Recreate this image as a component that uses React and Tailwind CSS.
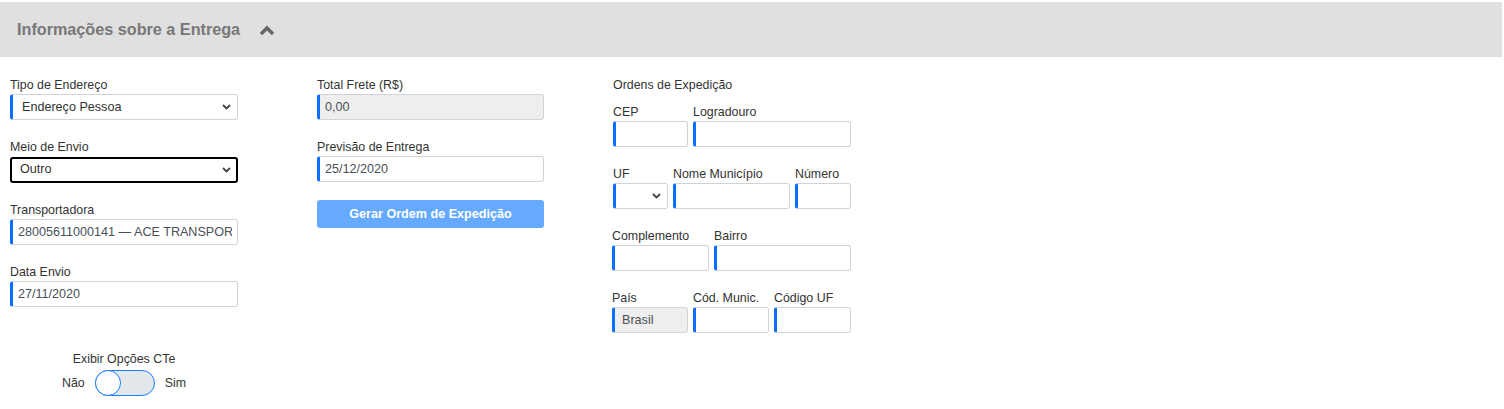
import { useState } from 'react';

const FONT = "font-['Liberation_Sans',Arial,sans-serif]";

function Label({ children }) {
    return <div className="mb-[2px] h-[14px] text-[12.4px] leading-[14px] text-[#333]">{children}</div>;
}

function TextInput({ value = '', disabled = false, className = '' }) {
    return (
        <input
            type="text" defaultValue={value} readOnly={disabled}
            className={`h-[26px] w-full rounded-[3px] border border-l-[3px] border-[#ced4da] border-l-[#0d6efd] px-[5px] text-[12.6px] text-[#495057] outline-none ${disabled ? 'bg-[#eeeeee]' : 'bg-white'} ${className}`}
        />
    );
}

function Chevron() {
    return (
        <svg className="pointer-events-none absolute right-[7px] top-1/2 -mt-[3px]" width="9" height="6" viewBox="0 0 9 6">
            <path d="M1 1l3.5 3.5L8 1" fill="none" stroke="#444" strokeWidth="1.8" />
        </svg>
    );
}

function Select({ value, focused = false, options = [] }) {
    return (
        <div className="relative">
            <select
                defaultValue={value}
                className={`h-[26px] w-full appearance-none rounded-[3px] bg-white px-[9px] text-[12.6px] text-[#333] outline-none ${focused ? 'border-2 border-black pl-[8px]' : 'border border-l-[3px] border-[#ced4da] border-l-[#0d6efd]'}`}
            >
                {options.map((o) => <option key={o} value={o}>{o}</option>)}
            </select>
            <Chevron />
        </div>
    );
}

function Field({ label, children, className = '' }) {
    return (
        <div className={className}>
            <Label>{label}</Label>
            {children}
        </div>
    );
}

export default function App() {
    const [cte, setCte] = useState(false);

    return (
        <div className={`${FONT} min-h-[409px] w-[1504px] bg-white`}>
            <div className="mt-[2px] flex h-[55px] w-[1502px] items-center bg-[#e0e0e0] pl-[17px]">
                <h3 className="text-[16.2px] font-bold text-[#777]">Informações sobre a Entrega</h3>
                <svg className="ml-[19px]" width="16" height="12" viewBox="0 0 16 12">
                    <path d="M2 10l6-6 6 6" fill="none" stroke="#666" strokeWidth="3.4" />
                </svg>
            </div>

            <div className="flex pt-[21px]">
                <div className="ml-[10px] flex w-[228px] flex-col gap-[20px]">
                    <Field label="Tipo de Endereço">
                        <Select value="Endereço Pessoa" options={['Endereço Pessoa', 'Endereço Empresa']} />
                    </Field>
                    <Field label="Meio de Envio">
                        <Select value="Outro" focused options={['Outro', 'Correios', 'Transportadora']} />
                    </Field>
                    <Field label="Transportadora">
                        <TextInput value="28005611000141 — ACE TRANSPORTES LTDA" />
                    </Field>
                    <Field label="Data Envio">
                        <TextInput value="27/11/2020" />
                    </Field>

                    <div className="mt-[25px] flex flex-col items-center">
                        <div className="text-[12.4px] leading-[14px] text-[#333]">Exibir Opções CTe</div>
                        <div className="mt-[4px] flex items-center text-[12.4px] text-[#333]">
                            <span>Não</span>
                            <button
                                type="button" onClick={() => setCte(!cte)}
                                className={`mx-[10px] flex h-[26px] w-[60px] items-center rounded-full border border-[#1a7dff] ${cte ? 'justify-end bg-[#1a7dff]' : 'bg-[#e3e7ea]'}`}
                            >
                                <span className="-m-[1px] h-[26px] w-[26px] rounded-full border border-[#1a7dff] bg-white" />
                            </button>
                            <span>Sim</span>
                        </div>
                    </div>
                </div>

                <div className="ml-[79px] flex w-[227px] flex-col gap-[20px]">
                    <Field label="Total Frete (R$)">
                        <TextInput value="0,00" disabled />
                    </Field>
                    <Field label="Previsão de Entrega">
                        <TextInput value="25/12/2020" />
                    </Field>
                    <button type="button" className="-mt-[2px] h-[28px] w-full rounded-[3px] bg-[#66aaff] text-[12.6px] font-bold text-white">
                        Gerar Ordem de Expedição
                    </button>
                </div>

                <div className="ml-[68px] flex w-[239px] flex-col">
                    <div className="mb-[13px] pl-[1px] text-[12.4px] leading-[14px] text-[#333]">Ordens de Expedição</div>
                    <div className="flex flex-col gap-[20px]">
                        <div className="flex gap-[5px]">
                            <Field label="CEP" className="w-[76px] pl-[1px]"><TextInput /></Field>
                            <Field label="Logradouro" className="flex-1"><TextInput /></Field>
                        </div>
                        <div className="flex gap-[5px]">
                            <Field label="UF" className="w-[56px] pl-[1px]"><Select value="" options={['', 'SP', 'RJ']} /></Field>
                            <Field label="Nome Município" className="flex-1"><TextInput /></Field>
                            <Field label="Número" className="w-[56px]"><TextInput /></Field>
                        </div>
                        <div className="flex gap-[5px]">
                            <Field label="Complemento" className="w-[97px]"><TextInput /></Field>
                            <Field label="Bairro" className="flex-1"><TextInput /></Field>
                        </div>
                        <div className="flex gap-[5px]">
                            <Field label="País" className="w-[76px]"><TextInput value="Brasil" disabled className="pl-[7px]" /></Field>
                            <Field label="Cód. Munic." className="w-[76px]"><TextInput /></Field>
                            <Field label="Código UF" className="flex-1"><TextInput /></Field>
                        </div>
                    </div>
                </div>
            </div>
        </div>
    );
}
